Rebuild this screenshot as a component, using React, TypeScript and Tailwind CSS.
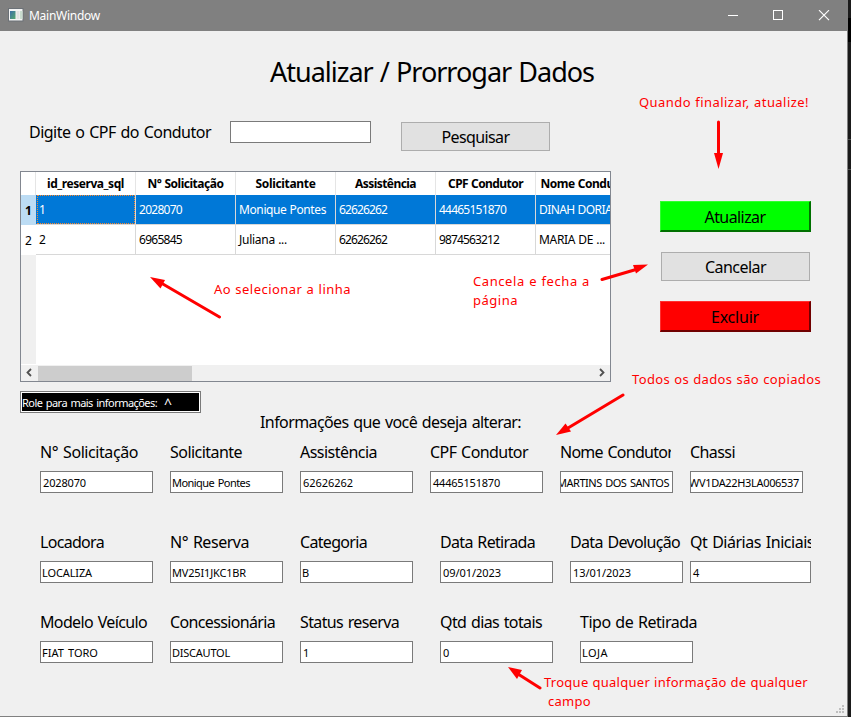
import { useLayoutEffect, useRef, type ReactNode } from "react";

/** Single line of text whose tracking is computed so that it fills `w` pixels. */
function T({ w, children, className = "" }: { w: number; children: string; className?: string }) {
  const ref = useRef<HTMLSpanElement>(null);
  useLayoutEffect(() => {
    const el = ref.current;
    if (!el) return;
    el.style.letterSpacing = "0px";
    const natural = el.getBoundingClientRect().width;
    el.style.letterSpacing = `${(w - natural) / children.length}px`;
  }, [w, children]);
  return (
    <span ref={ref} className={`inline-block shrink-0 whitespace-pre ${className}`}>
      {children}
    </span>
  );
}

const tahoma = "font-['Noto_Sans','DejaVu_Sans_Condensed',sans-serif] [word-spacing:0.07em]";
const segoe = "font-['Noto_Sans',sans-serif] [word-spacing:0.03em]";

type FieldData = {
  label: string;
  lw: number;
  value: string;
  vw: number;
  gap?: string;
  box?: string;
  end?: boolean;
};

const rows: { className: string; fields: FieldData[] }[] = [
  {
    className: "mt-[9px]",
    fields: [
      { label: "N° Solicitação", lw: 98, value: "2028070", vw: 43 },
      { label: "Solicitante", lw: 72, value: "Monique Pontes", vw: 78, gap: "ml-[17px]" },
      { label: "Assistência", lw: 77, value: "62626262", vw: 50, gap: "ml-[17px]" },
      { label: "CPF Condutor", lw: 98, value: "44465151870", vw: 67, gap: "ml-[17px]" },
      { label: "Nome Condutor", lw: 113, value: "MARTINS DOS SANTOS", vw: 112, gap: "ml-[17px]", end: true },
      { label: "Chassi", lw: 45, value: "WV1DA22H3LA006537", vw: 110, gap: "ml-[17px]", end: true },
    ],
  },
  {
    className: "mt-[37px]",
    fields: [
      { label: "Locadora", lw: 64, value: "LOCALIZA", vw: 50 },
      { label: "N° Reserva", lw: 79, value: "MV25I1JKC1BR", vw: 74, gap: "ml-[17px]" },
      { label: "Categoria", lw: 67, value: "B", vw: 7, gap: "ml-[17px]" },
      { label: "Data Retirada", lw: 95, value: "09/01/2023", vw: 58, gap: "ml-[27px]" },
      { label: "Data Devolução", lw: 110, value: "13/01/2023", vw: 58, gap: "ml-[17px]" },
      { label: "Qt Diárias Iniciais", lw: 124, value: "4", vw: 7, gap: "ml-[7px]", box: "w-[121px]" },
    ],
  },
  {
    className: "mt-[27px]",
    fields: [
      { label: "Modelo Veículo", lw: 107, value: "FIAT TORO", vw: 56 },
      { label: "Concessionária", lw: 105, value: "DISCAUTOL", vw: 58, gap: "ml-[17px]" },
      { label: "Status reserva", lw: 99, value: "1", vw: 7, gap: "ml-[17px]" },
      { label: "Qtd dias totais", lw: 102, value: "0", vw: 7, gap: "ml-[27px]" },
      { label: "Tipo de Retirada", lw: 117, value: "LOJA", vw: 26, gap: "ml-[27px]" },
    ],
  },
];

function Field({ label, lw, value, vw, gap = "", box = "w-[113px]", end }: FieldData) {
  const clipped = lw > 112 && label !== "Tipo de Retirada";
  const indent = /^\d/.test(value) ? "pl-[2px]" : "pl-px";
  return (
    <div className={`${gap} ${box} shrink-0`}>
      <div
        className={`flex h-[31px] text-[16px] leading-[24px] ${
          clipped ? (box === "w-[113px]" ? "w-[111px] overflow-hidden" : "overflow-hidden") : ""
        }`}
      >
        <T w={lw}>{label}</T>
      </div>
      <div
        className={`flex h-[22px] overflow-hidden border border-[#7a7a7a] bg-white text-[11px] leading-[22px] ${
          end ? "justify-end pr-[3px]" : indent
        }`}
      >
        <T w={vw}>{value}</T>
      </div>
    </div>
  );
}

const headers: [string, number][] = [
  ["id_reserva_sql", 77],
  ["N° Solicitação", 76],
  ["Solicitante", 60],
  ["Assistência", 61],
  ["CPF Condutor", 75],
  ["Nome Condutor", 90],
];
const row1: [string, number][] = [
  ["1", 6],
  ["2028070", 43],
  ["Monique Pontes", 87],
  ["62626262", 48],
  ["44465151870", 67],
  ["DINAH DORIA", 73],
];
const row2: [string, number][] = [
  ["2", 6],
  ["6965845", 43],
  ["Juliana ...", 48],
  ["62626262", 48],
  ["9874563212", 60],
  ["MARIA DE ...", 66],
];

function Table() {
  return (
    <div className={`flex h-[211px] w-[591px] flex-col overflow-hidden border border-[#828790] bg-white text-[12px] ${segoe}`}>
      <div className="flex h-[23px] shrink-0 font-bold leading-[24px]">
        <div className="w-[15px] shrink-0 border-r border-[#e5e5e5]" />
        {headers.map(([t, w]) => (
          <div key={t} className="flex w-[100px] shrink-0 justify-center border-r border-[#e5e5e5]">
            <T w={w}>{t}</T>
          </div>
        ))}
      </div>
      <div className="flex h-[30px] shrink-0 leading-[29px] text-white">
        <div className="w-[15px] shrink-0 bg-[#bcdcf4] text-center font-bold leading-[31px] text-black">1</div>
        {row1.map(([t, w], i) => (
          <div
            key={i}
            className={`flex w-[100px] shrink-0 border-b border-r border-[#d8d8d8] bg-[#0078d7] ${
              i === 0 ? "p-0" : "pl-[3px]"
            }`}
          >
            {i === 0 ? (
              <div className="ml-px flex w-[98px] border border-dotted border-[#ff8728] pl-px leading-[27px]">
                <T w={w}>{t}</T>
              </div>
            ) : (
              <T w={w}>{t}</T>
            )}
          </div>
        ))}
      </div>
      <div className="flex h-[30px] shrink-0 leading-[29px]">
        <div className="w-[15px] shrink-0 text-center leading-[31px]">2</div>
        {row2.map(([t, w], i) => (
          <div key={i} className="flex w-[100px] shrink-0 border-b border-r border-[#d8d8d8] pl-[3px]">
            <T w={w}>{t}</T>
          </div>
        ))}
      </div>
      <div className="h-[109px] w-[15px] shrink-0 bg-[#f0f0f0]" />
      <div className="mt-px flex h-[16px] shrink-0 items-center bg-[#f0f0f0]">
        <svg className="w-[17px] shrink-0" width="17" height="16" viewBox="0 0 17 16" fill="none" stroke="#505050" strokeWidth="1.8">
          <path d="M10 4 L6.5 7.5 L10 11" />
        </svg>
        <div className="h-[15px] w-[154px] bg-[#cdcdcd]" />
        <svg className="ml-auto shrink-0" width="17" height="16" viewBox="0 0 17 16" fill="none" stroke="#505050" strokeWidth="1.8">
          <path d="M7 4 L10.5 7.5 L7 11" />
        </svg>
      </div>
    </div>
  );
}

function PlainButton({ children }: { children: ReactNode }) {
  return (
    <button className="flex h-[29px] w-[149px] justify-center border border-[#adadad] bg-[#e1e1e1] text-[16px] leading-[29px]">
      {children}
    </button>
  );
}

function TitleBar() {
  return (
    <div className={`flex h-[31px] shrink-0 items-center bg-[#808080] pl-[8px] text-[12px] text-white ${segoe}`}>
      <svg className="-mt-px" width="16" height="14" viewBox="0 0 16 14">
        <defs>
          <linearGradient id="pane" x1="0" y1="0" x2="1" y2="1">
            <stop offset="0" stopColor="#3c6fa8" />
            <stop offset="1" stopColor="#57a86c" />
          </linearGradient>
        </defs>
        <rect x="0.5" y="0.5" width="14.5" height="12.5" fill="#f4f4f4" stroke="#6b7177" />
        <rect x="2" y="3" width="5.5" height="8" fill="url(#pane)" />
        <rect x="8.5" y="3" width="3" height="8" fill="#e2e2e2" />
        <rect x="12" y="3" width="2.5" height="8" fill="#c9dccf" />
      </svg>
      <T w={71} className="ml-[5px]">MainWindow</T>
      <svg className="ml-auto mr-[17px]" width="102" height="11" viewBox="0 0 102 11" fill="none" stroke="#fff">
        <path d="M0 5.5H10" />
        <rect x="45.5" y="0.5" width="9" height="9" />
        <path d="M91 0.2L101 10.2M101 0.2L91 10.2" strokeWidth="1.2" />
      </svg>
    </div>
  );
}

function Note({ className, children }: { className: string; children: ReactNode }) {
  return (
    <div className={`absolute flex flex-col items-start text-[13px] leading-[19px] text-[#ff0000] ${segoe} ${className}`}>
      {children}
    </div>
  );
}

function Annotations() {
  return (
    <>
      <Note className="left-[639px] top-[93px]">
        <T w={170}>Quando finalizar, atualize!</T>
      </Note>
      <Note className="left-[214px] top-[280px]">
        <T w={137}>Ao selecionar a linha</T>
      </Note>
      <Note className="left-[473px] top-[272px]">
        <T w={117}>Cancela e fecha a</T>
        <T w={45}>página</T>
      </Note>
      <Note className="left-[632px] top-[370px]">
        <T w={189}>Todos os dados são copiados</T>
      </Note>
      <Note className="left-[544px] top-[673px]">
        <T w={264}>Troque qualquer informação de qualquer</T>
        <T w={43} className="ml-[4px]">campo</T>
      </Note>
      <svg
        className="pointer-events-none absolute left-0 top-0"
        width="851"
        height="717"
        viewBox="0 0 851 717"
        stroke="#ff0000"
        strokeWidth="3"
        strokeLinecap="round"
      >
        <path d="M718.5 122V155M602 279.5L636 269.5M219.5 317L162 283.5M623 395L568 428M540 688L518 674" />
        <g fill="#ff0000" stroke="none">
          <path d="M714 153H723L718.5 169Z" />
          <path d="M633 265L636 273.5L648 264.5Z" />
          <path d="M165 280L160.5 288.5L150 277Z" />
          <path d="M565.5 423.5L571 431.5L556 435Z" />
          <path d="M522 670L517 679L508 667Z" />
        </g>
      </svg>
    </>
  );
}

export default function App() {
  return (
    <div className={`relative flex h-[717px] w-[851px] overflow-hidden bg-[#1b1b1b] text-black ${tahoma}`}>
      <div className="flex h-[717px] w-[848px] shrink-0 flex-col border-b border-r border-[#808080] bg-[#f0f0f0]">
        <TitleBar />
        <div className="flex h-[90px] shrink-0 pl-[270px] pt-[21px] text-[27px] leading-[40px]">
          <T w={324}>Atualizar / Prorrogar Dados</T>
        </div>
        <div className="flex h-[50px] shrink-0 pl-[29px] text-[16px] leading-[22px]">
          <div className="w-[201px]">
            <T w={182}>Digite o CPF do Condutor</T>
          </div>
          <div className="h-[22px] w-[141px] border border-[#7a7a7a] bg-white" />
          <div className="ml-[30px] mt-px">
            <PlainButton>
              <T w={68}>Pesquisar</T>
            </PlainButton>
          </div>
        </div>
        <div className="flex shrink-0 pl-[20px]">
          <Table />
          <div className="ml-[49px] mt-[30px] flex flex-col items-center text-[16px]">
            <button className="flex h-[31px] w-[151px] justify-center border-b-2 border-r-2 border-t border-l border-b-[#007000] border-r-[#007000] border-l-[#30ff30] border-t-[#30ff30] bg-[#00ff00] leading-[30px]">
              <T w={61}>Atualizar</T>
            </button>
            <div className="my-[20px]">
              <PlainButton>
                <T w={61}>Cancelar</T>
              </PlainButton>
            </div>
            <button className="flex h-[31px] w-[151px] justify-center border-b-2 border-r-2 border-t border-l border-b-[#700000] border-r-[#700000] border-l-[#ff3030] border-t-[#ff3030] bg-[#ff0000] leading-[30px]">
              <T w={48}>Excluir</T>
            </button>
          </div>
        </div>
        <div className="flex h-[49px] shrink-0 pl-[20px] pt-[9px]">
          <div className="h-[22px] w-[181px] border border-[#7a7a7a] bg-white p-px">
            <div className="flex h-[18px] w-[177px] bg-black text-[11px] leading-[20px] text-white">
              <T w={142}>Role para mais informações:  </T>
              <span className="text-[14px] leading-[22px]">^</span>
            </div>
          </div>
          <div className="ml-[59px] mt-[20px] text-[16px] leading-[22px]">
            <T w={261}>Informações que você deseja alterar:</T>
          </div>
        </div>
        {rows.map((r, i) => (
          <div key={i} className={`flex shrink-0 pl-[40px] ${r.className}`}>
            {r.fields.map((f) => (
              <Field key={f.label} {...f} />
            ))}
          </div>
        ))}
        <div className="mt-auto flex justify-end pb-[3px] pr-[3px]">
          <svg width="8" height="8" viewBox="0 0 8 8" fill="#bfbfbf">
            <path d="M6 0h2v2h-2zM3 3h2v2h-2zM6 3h2v2h-2zM0 6h2v2h-2zM3 6h2v2h-2zM6 6h2v2h-2z" />
          </svg>
        </div>
      </div>
      <div className="flex-1">
        <div className="h-[18px]" />
        <div className="h-[24px] bg-black" />
        <div className="h-[98px] border-b border-[#505050]" />
        <div className="h-[30px] border-b border-[#505050]" />
      </div>
      <Annotations />
    </div>
  );
}
